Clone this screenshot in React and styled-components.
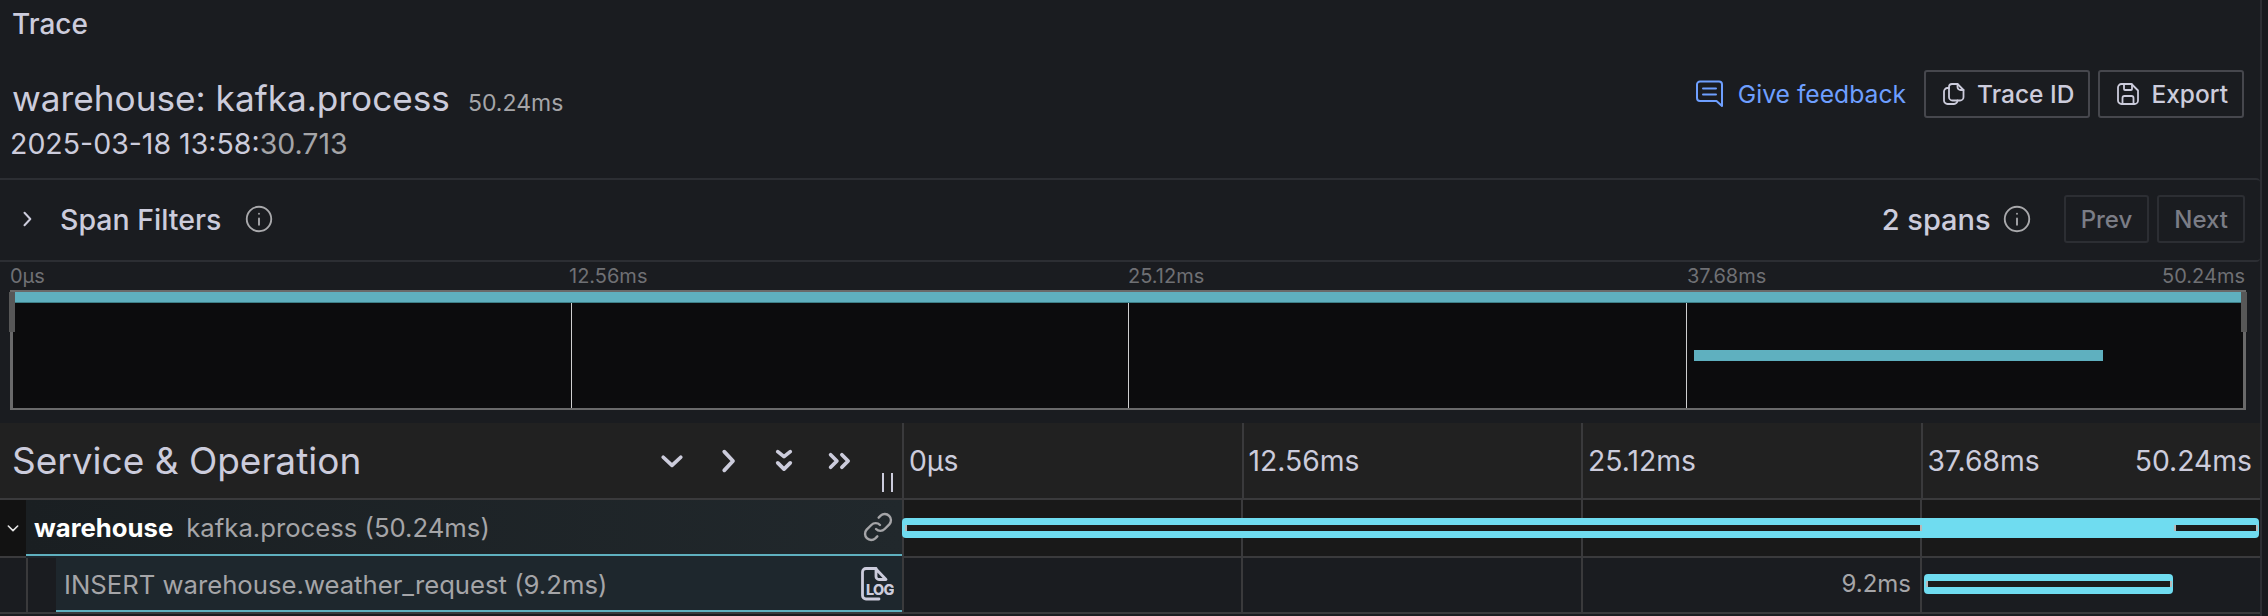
import styled, { createGlobalStyle } from "styled-components";

const Global = createGlobalStyle`
  html, body { margin: 0; padding: 0; background: #181a1e; }
  body { font-family: Inter, "Noto Sans", sans-serif; color: #ccccdc; }
`;

const Page = styled.div`
  width: 2260px;
  height: 616px;
  overflow: hidden;
  border-right: 2px solid #2c2e33;
  background: #1a1c20;
`;

const PageTitle = styled.div`
  height: 48px;
  line-height: 48px;
  padding-left: 12px;
  font-size: 28px;
  font-weight: 500;
`;

const HeaderBlock = styled.div`
  height: 130px;
  display: flex;
  justify-content: space-between;
  padding: 0 16px 0 12px;
`;

const TitleLine = styled.div`
  display: flex;
  align-items: baseline;
  gap: 18px;
  height: 76px;
  line-height: 100px;
`;

const TraceName = styled.span`
  font-size: 35.2px;
`;

const Duration = styled.span`
  font-size: 23px;
  color: #a5a5a8;
`;

const DateLine = styled.div`
  margin-left: -2px;
  font-size: 28.5px;
  line-height: 40px;
`;

const Muted = styled.span`
  color: #a5a5a8;
`;

const Actions = styled.div`
  display: flex;
  align-items: center;
  gap: 8px;
  height: 48px;
  margin-top: 22px;
`;

const FeedbackLink = styled.a`
  display: flex;
  align-items: center;
  gap: 14px;
  margin-right: 10px;
  font-size: 24.7px;
  color: #6e9fff;
`;

const Button = styled.div`
  display: flex;
  align-items: center;
  gap: 12px;
  height: 48px;
  box-sizing: border-box;
  padding: ${(p) => (p.$disabled ? "0 15px" : "0 14px 0 17px")};
  border: 2px solid ${(p) => (p.$disabled ? "#2c2e33" : "#46474d")};
  border-radius: 3px;
  font-size: ${(p) => (p.$disabled ? "24px" : "24.5px")};
  font-weight: 500;
  color: ${(p) => (p.$disabled ? "#7b7d86" : "#ccccdc")};
`;

const FilterBar = styled.div`
  height: 78px;
  display: flex;
  align-items: center;
  padding: 0 15px 2px 17px;
  border-top: 2px solid #2c2e33;
  border-bottom: 2px solid #2c2e33;
  border-radius: 0 4px 4px 0;
`;

const FilterLabel = styled.span`
  margin-left: 23px;
  margin-right: 24px;
  font-size: 28.5px;
  font-weight: 500;
`;

const SpanCount = styled.span`
  margin-left: auto;
  margin-right: 12px;
  font-size: 29px;
  font-weight: 500;
`;

const Pager = styled.div`
  display: flex;
  gap: 8px;
  margin-left: 33px;
`;

const MiniSection = styled.div`
  padding: 0 14px 13px 10px;
`;

const MiniLabels = styled.div`
  display: grid;
  grid-template-columns: repeat(4, 1fr);
  height: 28px;
  line-height: 28px;
  font-size: 20px;
  color: #6f7074;
`;

const MiniLabel = styled.div`
  display: flex;
  justify-content: space-between;
  padding: 0 1px 0 0;
`;

const Minimap = styled.div`
  position: relative;
  height: 120px;
  box-sizing: border-box;
  border: 3px solid #6a6a6a;
  border-top-width: 2px;
  border-bottom-width: 2px;
  background: #0c0c0d;
  display: grid;
  grid-template-columns: repeat(4, 1fr);
`;

const MiniCell = styled.div`
  border-left: ${(p) => (p.$first ? "none" : "1px solid #d0d0d0")};
`;

const MiniBar = styled.div`
  position: absolute;
  top: ${(p) => p.$top}px;
  left: ${(p) => p.$left}px;
  width: ${(p) => p.$width}px;
  height: ${(p) => p.$height}px;
  background: #5fb0bf;
  border-bottom: ${(p) => (p.$edge ? "1px solid #3f8088" : "none")};
`;

const MiniHandle = styled.div`
  position: absolute;
  top: 0;
  ${(p) => (p.$right ? "right: -4px" : "left: -4px")};
  width: 6px;
  height: 40px;
  background: #575757;
`;

const Table = styled.div`
  display: flex;
  flex-direction: column;
`;

const TableRow = styled.div`
  display: grid;
  grid-template-columns: 902px 1fr;
  height: ${(p) => p.$height}px;
  box-sizing: border-box;
  border-bottom: 2px solid #3a3a3c;
`;

const HeaderLeft = styled.div`
  display: flex;
  align-items: center;
  background: #212121;
  padding-left: 12px;
  position: relative;
`;

const ColumnTitle = styled.div`
  font-size: 37px;
  flex: 1;
`;

const Collapsers = styled.div`
  display: flex;
  gap: 26px;
  margin-right: 47px;
`;

const Resizer = styled.div`
  position: absolute;
  right: 9px;
  bottom: 6px;
  width: 7px;
  height: 19px;
  border-left: 2px solid #ccccdc;
  border-right: 2px solid #ccccdc;
`;

const Timeline = styled.div`
  display: grid;
  grid-template-columns: repeat(4, 1fr);
  background: ${(p) => p.$bg};
`;

const TimeCell = styled.div`
  display: flex;
  align-items: center;
  justify-content: space-between;
  box-sizing: border-box;
  border-left: 2px solid #3a3a3c;
  padding: 0 8px 0 5px;
  font-size: 28.3px;
`;

const ExpandCell = styled.div`
  width: 26px;
  display: flex;
  align-items: center;
  justify-content: center;
  background: #121212;
`;

const IndentCell = styled.div`
  width: 30px;
  margin-left: 26px;
  border-left: 2px solid #3a3a3c;
  box-sizing: border-box;
  background: #1a1c20;
`;

const SpanLeft = styled.div`
  display: flex;
`;

const SpanName = styled.div`
  flex: 1;
  display: flex;
  align-items: center;
  justify-content: space-between;
  padding: 0 8px;
  border-bottom: 2px solid #5fb0bf;
  background: ${(p) => p.$bg};
  box-shadow: ${(p) => (p.$under ? `0 2px 0 ${p.$under}` : "none")};
  font-size: 25.7px;
  color: #a5a5a8;
`;

const Service = styled.strong`
  margin-right: 13px;
  color: #fff;
  font-weight: 700;
`;

const SpanTrack = styled.div`
  grid-column: 1 / -1;
  position: relative;
  background-image: linear-gradient(#3a3a3c, #3a3a3c), linear-gradient(#3a3a3c, #3a3a3c),
    linear-gradient(#3a3a3c, #3a3a3c), linear-gradient(#3a3a3c, #3a3a3c);
  background-size: 2px 100%;
  background-repeat: no-repeat;
  background-position: 0 0, 339px 0, 679px 0, 1018px 0;
`;

const Bar = styled.div`
  position: absolute;
  top: ${(p) => p.$top}px;
  left: ${(p) => p.$left}px;
  width: ${(p) => p.$width}px;
  height: 20px;
  border-radius: 4px;
  background: #6fdcf0;
`;

const Inner = styled.div`
  position: absolute;
  top: 7px;
  left: ${(p) => p.$left}px;
  width: ${(p) => p.$width}px;
  height: 6px;
  box-sizing: border-box;
  background: #1b1b1b;
  border-left: 2px solid #b8b8b8;
  border-right: 2px solid #b8b8b8;
`;

const BarLabel = styled.div`
  position: absolute;
  right: 349px;
  top: 11px;
  font-size: 24px;
  line-height: 30px;
  color: #a5a5a8;
`;

const Icon = ({ size = 26, color = "currentColor", width = 2, children, view = 24 }) => (
  <svg
    width={size}
    height={size}
    viewBox={`0 0 ${view} ${view}`}
    fill="none"
    stroke={color}
    strokeWidth={width}
    strokeLinecap="round"
    strokeLinejoin="round"
  >
    {children}
  </svg>
);

const InfoIcon = () => (
  <Icon size={28} color="#a9a9ac" width={1.6}>
    <circle cx="12" cy="12" r="10.500" />
    <path d="M12 11.500v5.500M12 7.400v.2" />
  </Icon>
);

const FeedbackIcon = () => (
  <Icon size={28} view={28} color="#6e9fff">
    <path d="M4 1.500h19a3 3 0 0 1 3 3V26l-5.500-5H4a3 3 0 0 1-3-3V4.500a3 3 0 0 1 3-3z" />
    <path d="M7 8.500h13M7 14.500h13" />
  </Icon>
);

const CopyIcon = () => (
  <Icon size={22} view={22} width={1.8}>
    <path d="M9 1h5.500L20.500 7v7a3.500 3.500 0 0 1-3.500 3.500H9.500A3.500 3.500 0 0 1 6 14V4a3 3 0 0 1 3-3z" />
    <path d="M14.500 1v3a3 3 0 0 0 3 3h3" />
    <path d="M6 5H4.500A3.500 3.500 0 0 0 1 8.500v9A3.500 3.500 0 0 0 4.500 21H11a3.500 3.500 0 0 0 3.500-3.500" />
  </Icon>
);

const SaveIcon = () => (
  <Icon size={22} view={22} width={1.8}>
    <path d="M4.500 1h10L21 7.500V17.500a3.500 3.500 0 0 1-3.500 3.500h-13A3.500 3.500 0 0 1 1 17.500v-13A3.500 3.500 0 0 1 4.500 1z" />
    <path d="M7 1v5a1 1 0 0 0 1 1h6a1 1 0 0 0 1-1V1.500" />
    <path d="M5.500 21v-6a2 2 0 0 1 2-2h7a2 2 0 0 1 2 2v6" />
  </Icon>
);

const LinkIcon = () => (
  <Icon size={32} width={1.8}>
    <path d="M10.500 13.500a4.500 4.500 0 0 0 6.500 0l3.500-3.500a4.600 4.600 0 0 0-6.500-6.500l-1.500 1.500" />
    <path d="M13.500 10.500a4.500 4.500 0 0 0-6.500 0l-3.500 3.500a4.600 4.600 0 0 0 6.500 6.500l1.500-1.500" />
  </Icon>
);

const LogIcon = () => (
  <svg width="34" height="34" viewBox="0 0 34 34" fill="none" stroke="#ccccdc" strokeWidth="2.800" strokeLinecap="round" strokeLinejoin="round">
    <path d="M19 32H6a3.500 3.500 0 0 1-3.500-3.500V5A3.500 3.500 0 0 1 6 1.500h10" />
    <path d="M16 2l10 10.500H19a3 3 0 0 1-3-3z" />
    <text x="33.500" y="27.500" textAnchor="end" fontFamily="Inter, sans-serif" fontWeight="800" fontSize="14.500" letterSpacing="-0.800" fill="#ccccdc" stroke="none">
      LOG
    </text>
  </svg>
);

const ChevronDown = () => (
  <Icon size={30} width={3}>
    <path d="M5 9l7 6.500L19 9" />
  </Icon>
);

const ChevronRight = ({ size = 30, width = 3 }) => (
  <Icon size={size} width={width}>
    <path d="M9 4.500l7 7.500-7 7.500" />
  </Icon>
);

const DoubleDown = () => (
  <Icon size={30} width={3}>
    <path d="M7 4.500l5 4 5-4M7 13.500l5 5 5-5" />
  </Icon>
);

const DoubleRight = () => (
  <Icon size={30} width={3}>
    <path d="M4.500 7l5 5-5 5M13.500 7l5 5-5 5" />
  </Icon>
);

const ExpandChevron = () => (
  <Icon size={16} width={2.400} color="#e6e6e6">
    <path d="M5 9l7 7 7-7" />
  </Icon>
);

export default function App() {
  return (
    <Page>
      <Global />
      <PageTitle>Trace</PageTitle>
      <HeaderBlock>
        <div>
          <TitleLine>
            <TraceName>warehouse: kafka.process</TraceName>
            <Duration>50.24ms</Duration>
          </TitleLine>
          <DateLine>
            2025-03-18 13:58:<Muted>30.713</Muted>
          </DateLine>
        </div>
        <Actions>
          <FeedbackLink>
            <FeedbackIcon />
            Give feedback
          </FeedbackLink>
          <Button>
            <CopyIcon />
            Trace ID
          </Button>
          <Button>
            <SaveIcon />
            Export
          </Button>
        </Actions>
      </HeaderBlock>

      <FilterBar>
        <ChevronRight size={20} width={2.400} />
        <FilterLabel>Span Filters</FilterLabel>
        <InfoIcon />
        <SpanCount>2 spans</SpanCount>
        <InfoIcon />
        <Pager>
          <Button $disabled>Prev</Button>
          <Button $disabled>Next</Button>
        </Pager>
      </FilterBar>

      <MiniSection>
        <MiniLabels>
          <MiniLabel>0µs</MiniLabel>
          <MiniLabel>12.56ms</MiniLabel>
          <MiniLabel>25.12ms</MiniLabel>
          <MiniLabel>
            <span>37.68ms</span>
            <span>50.24ms</span>
          </MiniLabel>
        </MiniLabels>
        <Minimap>
          <MiniCell $first />
          <MiniCell />
          <MiniCell />
          <MiniCell />
          <MiniBar $top={0} $left={2} $width={2226} $height={10} $edge />
          <MiniBar $top={58} $left={1681} $width={409} $height={11} />
          <MiniHandle />
          <MiniHandle $right />
        </Minimap>
      </MiniSection>

      <Table>
        <TableRow $height={77}>
          <HeaderLeft>
            <ColumnTitle>Service &amp; Operation</ColumnTitle>
            <Collapsers>
              <ChevronDown />
              <ChevronRight />
              <DoubleDown />
              <DoubleRight />
            </Collapsers>
            <Resizer />
          </HeaderLeft>
          <Timeline $bg="#212121">
            <TimeCell>0µs</TimeCell>
            <TimeCell>12.56ms</TimeCell>
            <TimeCell>25.12ms</TimeCell>
            <TimeCell>
              <span>37.68ms</span>
              <span>50.24ms</span>
            </TimeCell>
          </Timeline>
        </TableRow>
        <TableRow $height={58}>
          <SpanLeft>
            <ExpandCell>
              <ExpandChevron />
            </ExpandCell>
            <SpanName $bg="linear-gradient(90deg, #1a1f22, #21282c)" $under="#1e272d">
              <span>
                <Service>warehouse</Service>
                kafka.process (50.24ms)
              </span>
              <LinkIcon />
            </SpanName>
          </SpanLeft>
          <Timeline $bg="#191919">
            <SpanTrack>
              <Bar $top={18} $left={0} $width={1357}>
                <Inner $left={3} $width={1017} />
                <Inner $left={1272} $width={84} />
              </Bar>
            </SpanTrack>
          </Timeline>
        </TableRow>
        <TableRow $height={56}>
          <SpanLeft>
            <IndentCell />
            <SpanName $bg="#1e272d">
              <span>INSERT warehouse.weather_request (9.2ms)</span>
              <LogIcon />
            </SpanName>
          </SpanLeft>
          <Timeline $bg="#1a1c20">
            <SpanTrack>
              <BarLabel>9.2ms</BarLabel>
              <Bar $top={16} $left={1022} $width={249}>
                <Inner $left={2} $width={246} />
              </Bar>
            </SpanTrack>
          </Timeline>
        </TableRow>
      </Table>
    </Page>
  );
}
